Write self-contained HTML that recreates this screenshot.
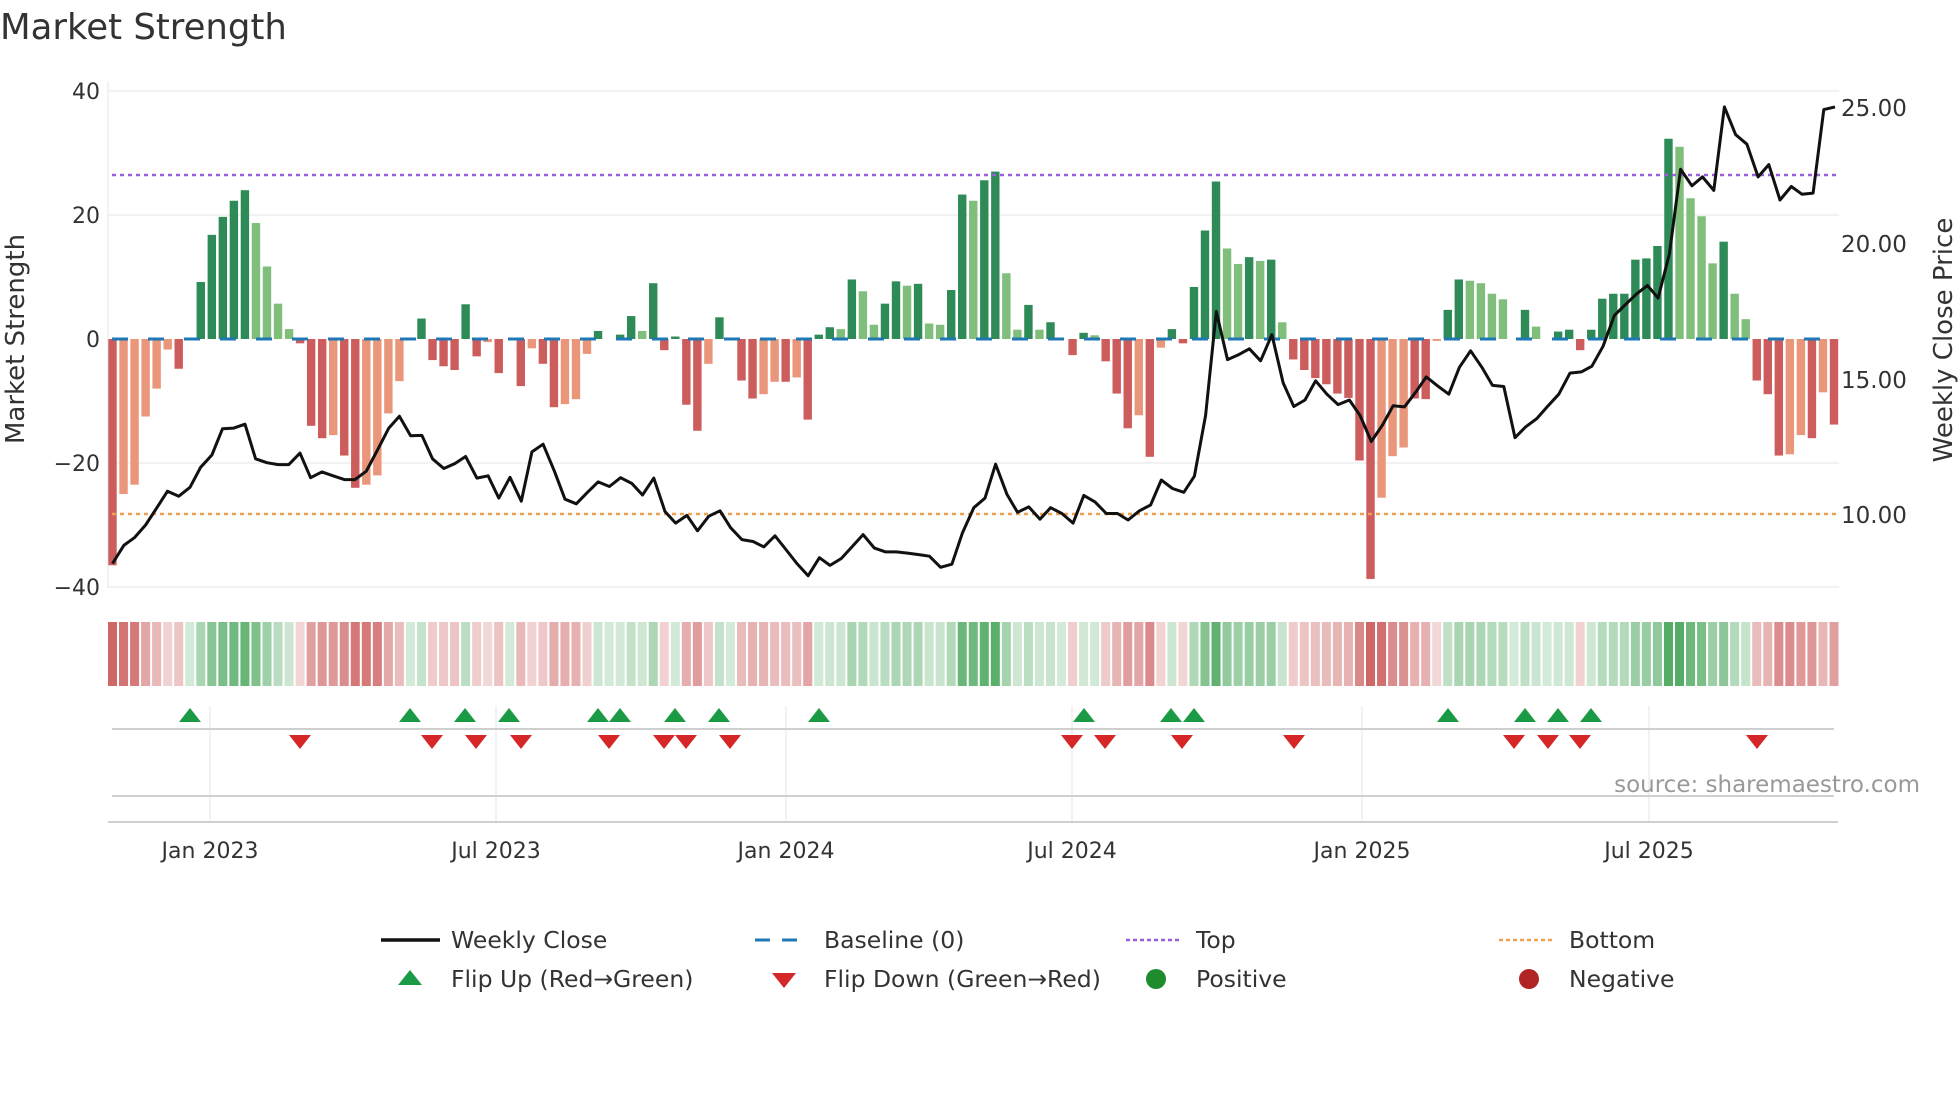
<!DOCTYPE html>
<html><head><meta charset="utf-8">
<style>
html,body{margin:0;padding:0;background:#fff;}
body{width:1960px;height:1102px;overflow:hidden;position:relative;font-family:"DejaVu Sans","Liberation Sans",sans-serif;color:#333;}
svg{position:absolute;left:0;top:0;}
</style></head>
<body>
<svg id="s" width="1960" height="1102" viewBox="0 0 1960 1102" xmlns="http://www.w3.org/2000/svg" font-family="DejaVu Sans, Liberation Sans, sans-serif">
<text x="0" y="39" font-size="35.5" fill="#333">Market Strength</text>
<g stroke="#eeeeee" stroke-width="1.5">
<line x1="108" y1="91" x2="1839" y2="91"/><line x1="108" y1="215" x2="1839" y2="215"/>
<line x1="108" y1="463" x2="1839" y2="463"/><line x1="108" y1="587" x2="1839" y2="587"/>
<line x1="108" y1="81" x2="108" y2="588"/>
<line x1="210" y1="706" x2="210" y2="822"/><line x1="496" y1="706" x2="496" y2="822"/><line x1="786" y1="706" x2="786" y2="822"/><line x1="1072" y1="706" x2="1072" y2="822"/><line x1="1362" y1="706" x2="1362" y2="822"/><line x1="1649" y1="706" x2="1649" y2="822"/>
</g>
<g font-size="22" fill="#333" text-anchor="end">
<text x="100" y="99">40</text><text x="100" y="223">20</text><text x="100" y="347">0</text><text x="100" y="471">−20</text><text x="100" y="595">−40</text>
</g>
<g font-size="23" fill="#333">
<text x="1841" y="116">25.00</text><text x="1841" y="252">20.00</text><text x="1841" y="388">15.00</text><text x="1841" y="523">10.00</text>
</g>
<text transform="translate(24,339) rotate(-90)" font-size="26" fill="#333" text-anchor="middle">Market Strength</text>
<text transform="translate(1952,340) rotate(-90)" font-size="26" fill="#333" text-anchor="middle">Weekly Close Price</text>
<g id="bars"></g>
<line x1="112" y1="339" x2="1836" y2="339" stroke="#1f77b4" stroke-width="3" stroke-dasharray="16,20"/>
<line x1="112" y1="175" x2="1836" y2="175" stroke="#9b5fd8" stroke-width="2.5" stroke-dasharray="4,4"/>
<line x1="112" y1="514" x2="1836" y2="514" stroke="#f0a050" stroke-width="2.5" stroke-dasharray="4,4"/>
<polyline id="price" fill="none" stroke="#111" stroke-width="3" stroke-linejoin="round"/>
<g id="strip"></g>
<line x1="112" y1="729" x2="1834" y2="729" stroke="#cfcfcf" stroke-width="2"/>
<line x1="112" y1="796" x2="1834" y2="796" stroke="#cfcfcf" stroke-width="2"/>
<line x1="108" y1="822" x2="1838" y2="822" stroke="#cfcfcf" stroke-width="2"/>
<g id="mk"></g>
<g font-size="22" fill="#333" text-anchor="middle">
<text x="210" y="858">Jan 2023</text><text x="496" y="858">Jul 2023</text><text x="786" y="858">Jan 2024</text><text x="1072" y="858">Jul 2024</text><text x="1362" y="858">Jan 2025</text><text x="1649" y="858">Jul 2025</text>
</g>
<text x="1920" y="792" font-size="23" fill="#999" text-anchor="end">source: sharemaestro.com</text>
<g font-size="23.5" fill="#333">
<line x1="381" y1="940" x2="440" y2="940" stroke="#111" stroke-width="3.5"/>
<text x="451" y="948">Weekly Close</text>
<line x1="755" y1="940" x2="808" y2="940" stroke="#1f77b4" stroke-width="3" stroke-dasharray="15,12"/>
<text x="824" y="948">Baseline (0)</text>
<line x1="1126" y1="940" x2="1181" y2="940" stroke="#9b5fd8" stroke-width="2.5" stroke-dasharray="4,3"/>
<text x="1196" y="948">Top</text>
<line x1="1499" y1="940" x2="1554" y2="940" stroke="#f0a050" stroke-width="2.5" stroke-dasharray="4,3"/>
<text x="1569" y="948">Bottom</text>
<polygon points="410,970 422,985 398,985" fill="#1a9a44"/>
<text x="451" y="987">Flip Up (Red→Green)</text>
<polygon points="772,973 796,973 784,988" fill="#d62728"/>
<text x="824" y="987">Flip Down (Green→Red)</text>
<circle cx="1156" cy="979" r="10" fill="#1e8c2c"/>
<text x="1196" y="987">Positive</text>
<circle cx="1529" cy="979" r="10" fill="#b02424"/>
<text x="1569" y="987">Negative</text>
</g>
</svg>
<script>
var V=[[-36.5,'D'],[-25,'L'],[-23.5,'L'],[-12.5,'L'],[-8,'L'],[-1.7,'L'],[-4.8,'D'],[0,'D'],[9.2,'D'],[16.8,'D'],[19.7,'D'],[22.3,'D'],[24,'D'],[18.7,'L'],[11.7,'L'],[5.7,'L'],[1.6,'L'],[-0.7,'D'],[-14,'D'],[-16,'D'],[-15.5,'L'],[-18.8,'D'],[-24,'D'],[-23.5,'L'],[-22,'L'],[-12,'L'],[-6.8,'L'],[0,'D'],[3.3,'D'],[-3.4,'D'],[-4.4,'D'],[-5,'D'],[5.6,'D'],[-2.8,'D'],[-0.5,'L'],[-5.5,'D'],[0,'D'],[-7.6,'D'],[-1.5,'L'],[-4,'D'],[-11,'D'],[-10.5,'L'],[-9.7,'L'],[-2.4,'L'],[1.3,'D'],[0,'L'],[0.7,'D'],[3.7,'D'],[1.3,'L'],[9,'D'],[-1.8,'D'],[0.4,'D'],[-10.6,'D'],[-14.8,'D'],[-4,'L'],[3.5,'D'],[0,'D'],[-6.7,'D'],[-9.6,'D'],[-8.9,'L'],[-6.9,'L'],[-6.9,'D'],[-6.2,'L'],[-13,'D'],[0.7,'D'],[1.9,'D'],[1.6,'L'],[9.6,'D'],[7.7,'L'],[2.3,'L'],[5.7,'D'],[9.3,'D'],[8.6,'L'],[8.9,'D'],[2.5,'L'],[2.3,'L'],[7.9,'D'],[23.3,'D'],[22.3,'L'],[25.6,'D'],[27,'D'],[10.6,'L'],[1.5,'L'],[5.5,'D'],[1.5,'L'],[2.7,'D'],[0,'D'],[-2.6,'D'],[1,'D'],[0.6,'L'],[-3.6,'D'],[-8.8,'D'],[-14.4,'D'],[-12.3,'L'],[-19,'D'],[-1.4,'L'],[1.6,'D'],[-0.7,'D'],[8.4,'D'],[17.5,'D'],[25.4,'D'],[14.6,'L'],[12.1,'L'],[13.2,'D'],[12.6,'L'],[12.8,'D'],[2.7,'L'],[-3.3,'D'],[-5,'D'],[-6.3,'D'],[-7.3,'D'],[-8.8,'D'],[-9.5,'D'],[-19.6,'D'],[-38.7,'D'],[-25.6,'L'],[-18.9,'L'],[-17.5,'L'],[-9.6,'D'],[-9.7,'D'],[-0.3,'L'],[4.7,'D'],[9.6,'D'],[9.4,'L'],[9,'L'],[7.3,'L'],[6.4,'L'],[0,'D'],[4.7,'D'],[2,'L'],[0,'D'],[1.2,'D'],[1.5,'D'],[-1.8,'D'],[1.5,'D'],[6.5,'D'],[7.3,'D'],[7.3,'D'],[12.8,'D'],[13,'D'],[15,'D'],[32.3,'D'],[31,'L'],[22.7,'L'],[19.8,'L'],[12.2,'L'],[15.7,'D'],[7.3,'L'],[3.2,'L'],[-6.7,'D'],[-8.9,'D'],[-18.8,'D'],[-18.6,'L'],[-15.5,'L'],[-16,'D'],[-8.6,'L'],[-13.8,'D']];
var ns="http://www.w3.org/2000/svg";
function el(t,a,p){var e=document.createElementNS(ns,t);for(var k in a)e.setAttribute(k,a[k]);p.appendChild(e);return e;}
var N=V.length,x0=112.5,x1=1834,sp=(x1-x0)/(N-1),bw=8.4;
var bars=document.getElementById('bars'),strip=document.getElementById('strip');
for(var i=0;i<N;i++){var v=V[i][0],d=V[i][1]=='D',cx=x0+i*sp;
 var col=v>=0?(d?'#2e8b57':'#7fbf7b'):(d?'#cd5c5c':'#e9967a');
 var h=Math.abs(v)*6.2; if(h>0.5) el('rect',{x:cx-bw/2,y:v>=0?339-h:339,width:bw,height:h,fill:col},bars);
 var a=0.22+0.65*Math.min(1,Math.abs(v)/28);
 var sc=v>=0?'rgba(60,160,80,'+a+')':'rgba(200,80,80,'+a+')';
 el('rect',{x:cx-sp/2+1,y:622,width:sp-2,height:64,fill:sc},strip);}
var Z1=[[180,1465],[198,1418],[215,1398],[233,1365],[251,1320],[268,1277],[286,1290],[304,1267],[321,1215],[339,1183],[356,1115],[374,1113],[392,1103],[409,1193],[427,1203],[445,1208],[462,1208],[480,1178],[497,1242],[515,1227],[533,1237],[551,1247],[568,1247],[586,1225],[604,1170],[622,1113],[639,1082],[657,1133],[675,1132],[692,1193],[710,1218],[728,1205],[745,1187],[763,1243],[781,1237],[798,1295],[816,1241],[834,1303],[851,1175],[869,1155],[887,1225],[904,1298],[922,1310],[940,1280],[957,1253],[975,1265],[993,1242],[1011,1257],[1028,1287],[1046,1243],[1064,1330],[1081,1360],[1099,1340],[1116,1380],[1134,1342],[1152,1328],[1169,1372],[1187,1403],[1205,1408],[1222,1422],[1240,1393],[1258,1430],[1275,1465],[1293,1497],[1311,1450],[1328,1470],[1346,1452],[1364,1420],[1381,1390],[1399,1425],[1417,1435],[1434,1435],[1452,1438],[1470,1442],[1487,1446],[1505,1475],[1523,1467],[1540,1385],[1558,1320]];
var Z2=[[8,1295],[25,1207],[43,1285],[60,1332],[78,1318],[96,1350],[113,1320],[131,1335],[149,1360],[166,1288],[184,1305],[202,1335],[220,1335],[237,1352],[255,1328],[273,1313],[290,1248],[308,1270],[326,1280],[343,1238],[361,1080],[378,810],[396,935],[414,922],[431,907],[449,938],[467,870],[485,995],[502,1057],[520,1040],[537,990],[555,1025],[573,1052],[591,1040],[608,1080],[626,1148],[644,1105],[661,1055],[679,1058],[697,1020],[714,980],[732,1003],[750,1025],[767,955],[785,912],[803,955],[820,1002],[838,1005],[856,1138],[873,1110],[891,1088],[909,1055],[926,1025],[944,970],[962,967],[979,952],[997,900],[1015,820],[1032,793],[1050,765],[1068,742],[1085,775],[1103,660],[1121,440],[1139,483],[1156,460],[1174,495],[1191,278],[1209,350],[1227,375],[1245,460],[1262,428],[1280,520],[1298,485],[1315,505],[1333,502],[1350,285],[1368,278]];
var VY=2.6;
var pts=[];Z1.forEach(function(p){pts.push((p[0]/1.6).toFixed(1)+','+(p[1]/VY).toFixed(1));});
Z2.forEach(function(p){pts.push((980+p[0]/1.6).toFixed(1)+','+(p[1]/VY).toFixed(1));});
document.getElementById('price').setAttribute('points',pts.join(' '));
var mk=document.getElementById('mk');
[190,410,465,509,598,620,675,719,819,1084,1171,1194,1448,1525,1558,1591].forEach(function(x){el('polygon',{points:x+',708 '+(x+11)+',722 '+(x-11)+',722',fill:'#1a9a44'},mk);});
[300,432,476,521,609,664,686,730,1072,1105,1182,1294,1514,1548,1580,1757].forEach(function(x){el('polygon',{points:(x-11)+',735 '+(x+11)+',735 '+x+',749',fill:'#d62728'},mk);});
</script>
</body></html>
